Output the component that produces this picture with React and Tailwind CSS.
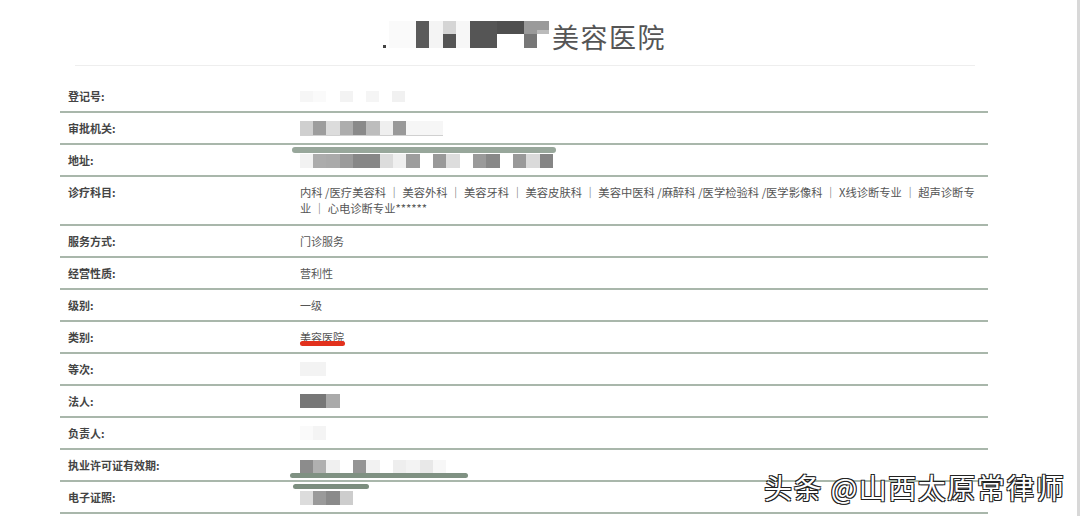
import React from 'react';

const font = { fontFamily: '"Noto Sans CJK SC", "Noto Sans", sans-serif' };

// mosaic blocks: [width, color]
const Mosaic = ({ blocks, h = 'h-[14px]' }) => (
  <div className="flex">
    {blocks.map(([w, c], i) => (
      <div key={i} className={h} style={{ width: w, background: c }} />
    ))}
  </div>
);

const rows = [
  {
    label: '登记号:',
    value: <div className="pt-[1px]"><Mosaic h="h-[11px]" blocks={[[13, '#f6f6f6'], [13, '#fafafa'], [14, '#fff'], [13, '#f3f3f3'], [13, '#fff'], [13, '#f5f5f5'], [13, '#fff'], [13, '#f1f1f1']]} /></div>,
  },
  {
    label: '审批机关:',
    value: (
      <div className="border-b border-[#d0d0d0] w-[143px]">
        <Mosaic blocks={[[13, '#cfcfcf'], [13, '#9d9d9d'], [14, '#dcdcdc'], [13, '#adadad'], [13, '#8a8a8a'], [14, '#bdbdbd'], [13, '#efefef'], [13, '#999'], [37, '#f6f6f6']]} />
      </div>
    ),
  },
  {
    label: '地址:',
    value: (
      <div className="relative pt-[2px]">
        <div className="absolute left-[-8px] top-[-5px] h-[6px] w-[264px] rounded-[3px] bg-[#98a79b]" />
        <Mosaic blocks={[[13, '#f2f2f2'], [13, '#acacac'], [14, '#aaa'], [13, '#9b9b9b'], [27, '#878787'], [13, '#dcdcdc'], [13, '#efefef'], [14, '#9d9d9d'], [13, '#fff'], [13, '#999'], [14, '#ddd'], [13, '#fff'], [13, '#9a9a9a'], [14, '#888'], [13, '#fff'], [13, '#999'], [14, '#dadada'], [13, '#858585']]} />
      </div>
    ),
  },
  {
    label: '诊疗科目:',
    tall: true,
    value: (
      <div className="pr-[8px] leading-[16px] text-[11.3px]">
        内科 /医疗美容科 ｜ 美容外科 ｜ 美容牙科 ｜ 美容皮肤科 ｜ 美容中医科 /麻醉科 /医学检验科 /医学影像科 ｜ X线诊断专业 ｜ 超声诊断专业 ｜ 心电诊断专业******
      </div>
    ),
  },
  { label: '服务方式:', value: '门诊服务' },
  { label: '经营性质:', value: '营利性' },
  { label: '级别:', value: '一级' },
  {
    label: '类别:',
    value: (
      <div className="relative inline-block">
        <span className="underline decoration-[#888]">美容医院</span>
        <div className="absolute left-[0px] top-[12px] h-[5px] w-[45px] rounded-full bg-[#e2311d]" />
      </div>
    ),
  },
  { label: '等次:', value: <Mosaic blocks={[[26, '#f3f3f3']]} /> },
  { label: '法人:', value: <Mosaic blocks={[[26, '#777'], [14, '#aaa']]} /> },
  { label: '负责人:', value: <Mosaic blocks={[[13, '#fafafa'], [13, '#f4f4f4']]} /> },
  {
    label: '执业许可证有效期:',
    value: (
      <div className="relative pt-[3px]">
        <Mosaic blocks={[[13, '#8c8c8c'], [13, '#b0b0b0'], [14, '#f0f0f0'], [13, '#fff'], [13, '#959595'], [14, '#f2f2f2'], [13, '#fff'], [13, '#eee'], [14, '#f3f3f3'], [13, '#e8e8e8'], [13, '#f7f7f7']]} />
        <div className="absolute left-[-10px] top-[16px] h-[5px] w-[178px] rounded-[3px] bg-[#7f9182]" />
      </div>
    ),
  },
  {
    label: '电子证照:',
    value: (
      <div className="relative pt-[2px]">
        <div className="absolute left-[-7px] top-[-5px] h-[5px] w-[76px] rounded-[3px] bg-[#7c8e7f]" />
        <Mosaic blocks={[[13, '#dcdcdc'], [13, '#9a9a9a'], [14, '#8a8a8a'], [13, '#cdcdcd']]} />
      </div>
    ),
  },
];

export default function App() {
  return (
    <div className="relative w-[1080px] h-[516px] overflow-hidden bg-white" style={font}>
      {/* title */}
      <div className="flex items-end h-[52px] pl-[383px] pt-[14px]">
        <div className="flex items-end mb-[3px]">
          <div className="w-[3px] h-[3px] bg-[#444] mb-[1px] mr-[3px]" />
          <div className="flex items-start h-[28px]">
            <div className="w-[27px] h-[27px] bg-[#fafafa]" />
            <div className="w-[13px] h-[27px] bg-[#5a5a5a]" />
            <div className="w-[14px] h-[27px] bg-[#f4f4f4]" />
            <div className="flex flex-col w-[13px]"><div className="h-[13px] bg-[#d5d5d5]" /><div className="h-[14px] bg-[#555]" /></div>
            <div className="w-[14px] h-[27px] bg-[#f7f7f7]" />
            <div className="flex flex-col w-[27px]"><div className="h-[13px] bg-[#555]" /><div className="h-[14px] bg-[#555]" /></div>
            <div className="flex flex-col w-[27px]"><div className="h-[13px] bg-[#4f4f4f]" /><div className="h-[14px] bg-[#fff]" /></div>
            <div className="flex flex-col w-[13px]"><div className="h-[13px] bg-[#9a9a9a]" /><div className="h-[14px] bg-[#777]" /></div>
            <div className="flex flex-col w-[12px]"><div className="h-[9px] bg-[#9a9a9a]" /><div className="h-[4px] bg-[#bbb]" /></div>
          </div>
        </div>
        <h1 className="text-[27px] leading-[30px] text-[#555] ml-[3px] tracking-[1.5px]">美容医院</h1>
      </div>

      <div className="ml-[75px] mr-[105px] mt-[13px] h-px bg-[#eeeeee]" />

      {/* table */}
      <div className="ml-[60px] w-[928px] mt-[15px] text-[11px] leading-[16px]">
        {rows.map((r, i) => (
          <div
            key={i}
            className={`flex border-b-2 border-[#a9b7ab] ${r.tall ? 'h-[49px] pt-[7px]' : 'h-[32px] items-center'}`}
          >
            <div className="w-[240px] shrink-0 pl-[8px] font-bold text-[#444]">{r.label}</div>
            <div className="flex-1 text-[#555]">{r.value}</div>
          </div>
        ))}
      </div>

      {/* right edge strip */}
      <div className="absolute top-0 right-0 w-[3px] h-full bg-[#d8d8d8]" />

      {/* watermark */}
      <div className="absolute left-[764px] top-[470px] text-[28px] leading-[34px] text-white tracking-[1.5px] [text-shadow:1px_1px_0_#222,-1px_-1px_0_#222,1px_-1px_0_#222,-1px_1px_0_#222]">
        头条 @山西太原常律师
      </div>
    </div>
  );
}
